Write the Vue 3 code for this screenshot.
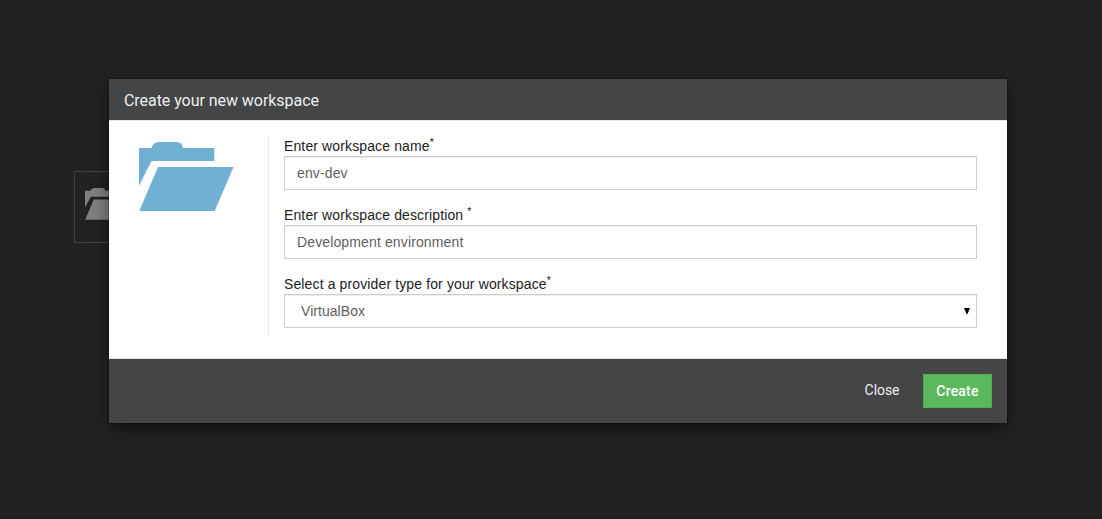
<script setup>
import { ref } from 'vue'

const name = ref('env-dev')
const description = ref('Development environment')
const provider = ref('VirtualBox')
</script>

<template>
  <div class="page">
    <div class="tile">
      <svg class="tile-icon" viewBox="0 0 95 70" preserveAspectRatio="none">
        <path d="M0 43V6H12.500Q14 0 20 0H38Q43 0 44 6H75V19.200H12.500ZM0.300 69.200L19 25.200H94.500L76 69.200Z" />
      </svg>
    </div>
    <section class="modal">
      <header class="modal-header"><h4>Create your new workspace</h4></header>
      <div class="modal-body">
        <div class="picture">
          <svg class="folder" viewBox="0 0 95 70">
            <path d="M0 43.800V6H12.500Q14 0 20 0H38Q43 0 44 6H75.300V19H12.500ZM0.300 69L19 25H94.500L75.700 69Z" />
          </svg>
        </div>
        <form class="fields" @submit.prevent>
          <div class="group">
            <label>Enter workspace name<sup>*</sup></label>
            <input v-model="name" class="control" type="text" />
          </div>
          <div class="group">
            <label>Enter workspace description <sup>*</sup></label>
            <input v-model="description" class="control" type="text" />
          </div>
          <div class="group">
            <label>Select a provider type for your workspace<sup>*</sup></label>
            <div class="control select">
              <span>{{ provider }}</span>
              <svg class="arrow" viewBox="0 0 6 6"><path d="M0 0H6L3.500 6H2.500Z" /></svg>
            </div>
          </div>
        </form>
      </div>
      <footer class="modal-footer">
        <button class="btn close" type="button">Close</button>
        <button class="btn create" type="button">Create</button>
      </footer>
    </section>
  </div>
</template>

<style>
body {
  background: #222;
}
</style>

<style scoped>
* {
  box-sizing: border-box;
}
.page {
  position: relative;
  height: 519px;
  padding: 79px 95px 0 109px;
  overflow: hidden;
  background: #222;
  border-bottom: 1px solid #231b1f;
  font-family: Roboto, "Liberation Sans", sans-serif;
  font-size: 14px;
}
.tile {
  position: absolute;
  left: 74px;
  top: 171px;
  width: 100px;
  height: 72px;
  padding: 16px 0 0 10px;
  border: 1px solid #424242;
}
.tile-icon {
  display: block;
  width: 44px;
  height: 32px;
  fill: #808080;
}
.modal {
  position: relative;
  width: 898px;
  height: 344px;
  display: flex;
  flex-direction: column;
  background: #fff;
  box-shadow: 0 0 0 1px rgba(0, 0, 0, 0.2), 0 5px 15px rgba(0, 0, 0, 0.5);
}
.modal-header {
  height: 42px;
  padding: 0 15px;
  background: #444547;
  border-bottom: 1px solid #e5e5e5;
}
h4 {
  margin: 0;
  font-size: 16px;
  font-weight: 400;
  line-height: 43px;
  letter-spacing: -0.05px;
  color: #eee;
}
.modal-body {
  flex: 1;
  display: flex;
  padding: 15px 30px 0 0;
}
.picture {
  width: 160px;
  height: 200px;
  padding: 6px 0 0 29.500px;
  border-right: 1px solid #eee;
}
.folder {
  display: block;
  width: 95px;
  height: 70px;
  fill: #70b0d2;
}
.fields {
  flex: 1;
  padding-left: 15px;
  font-family: "Liberation Sans", Arial, sans-serif;
}
.group {
  height: 69px;
}
label {
  display: block;
  height: 20px;
  line-height: 20px;
  letter-spacing: 0.125px;
  color: #222;
  white-space: nowrap;
}
sup {
  position: relative;
  top: -0.5em;
  font-size: 75%;
  line-height: 0;
  vertical-align: baseline;
}
.control {
  display: block;
  width: 100%;
  height: 34px;
  margin: 0;
  padding: 6px 12px;
  border: 1px solid #ccc;
  border-radius: 0;
  outline: none;
  background: #fff;
  color: #606060;
  font: 14px/20px "Liberation Sans", Arial, sans-serif;
  letter-spacing: 0.13px;
  box-shadow: inset 0 1px 1px rgba(0, 0, 0, 0.075);
}
.select {
  display: flex;
  justify-content: space-between;
  padding: 6px 6px 6px 16px;
  letter-spacing: 0.05px;
}
.arrow {
  width: 6px;
  height: 6px;
  margin-top: 7px;
}
.modal-footer {
  height: 65px;
  display: flex;
  justify-content: flex-end;
  gap: 10.500px;
  padding: 15px;
  background: #444547;
  border-top: 1px solid #e5e5e5;
}
.btn {
  height: 34px;
  padding: 0 12px;
  border: 1px solid transparent;
  background: none;
  color: #fff;
  font: 14px/20px Roboto, "Liberation Sans", sans-serif;
}
.close {
  height: 32px;
  color: #eee;
  letter-spacing: -0.05px;
}
.create {
  width: 69px;
  background: #5cb85c;
  border-color: #4cae4c;
  font-weight: 500;
  letter-spacing: 0.2px;
}
</style>
